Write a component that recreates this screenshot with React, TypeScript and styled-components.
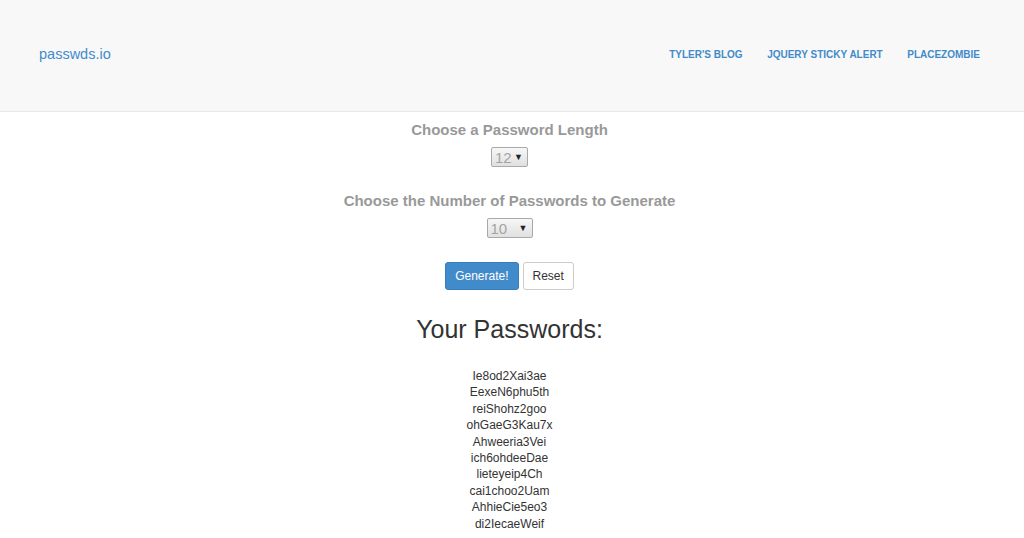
import styled, { createGlobalStyle } from "styled-components";

const GlobalStyle = createGlobalStyle`
  html, body {
    margin: 0;
    padding: 0;
    background: #ffffff;
    font-family: "Liberation Sans", Arial, sans-serif;
    color: #333333;
  }
`;

const passwords = [
  "Ie8od2Xai3ae",
  "EexeN6phu5th",
  "reiShohz2goo",
  "ohGaeG3Kau7x",
  "Ahweeria3Vei",
  "ich6ohdeeDae",
  "lieteyeip4Ch",
  "cai1choo2Uam",
  "AhhieCie5eo3",
  "di2IecaeWeif",
];

const links = ["Tyler's Blog", "jQuery Sticky Alert", "PlaceZombie"];

const Navbar = styled.header`
  height: 112px;
  box-sizing: border-box;
  background: #f8f8f8;
  border-bottom: 1px solid #e7e7e7;
  display: flex;
  align-items: center;
  justify-content: space-between;
  padding: 0 44px 3px 39px;
`;

const Brand = styled.a`
  font-size: 14.5px;
  color: #428bca;
  text-decoration: none;
`;

const NavLinks = styled.nav`
  display: flex;
  gap: 24.5px;
`;

const NavLink = styled.a`
  font-size: 10px;
  font-weight: bold;
  text-transform: uppercase;
  color: #428bca;
  text-decoration: none;
`;

const Main = styled.main`
  display: flex;
  flex-direction: column;
  align-items: center;
  padding: 8px 5px 0 0;
`;

const Label = styled.h3`
  margin: 0;
  font-size: 15px;
  line-height: 20px;
  font-weight: bold;
  color: #999999;
`;

const Select = styled.div<{ $width: number }>`
  margin-top: 7px;
  width: ${(p) => p.$width}px;
  height: 20px;
  box-sizing: border-box;
  border: 1px solid #a9a9a9;
  border-radius: 2px;
  background: linear-gradient(#f7f7f7, #e0e0e0);
  display: flex;
  align-items: center;
  justify-content: space-between;
  padding: 0 4px 0 3px;
  font-size: 15px;
  color: #a4a4a4;
`;

const Arrow = styled.span`
  font-size: 9px;
  color: #222;
`;

const Field = styled.div<{ $spacing?: number }>`
  display: flex;
  flex-direction: column;
  align-items: center;
  margin-bottom: ${(p) => p.$spacing ?? 0}px;
`;

const Buttons = styled.div`
  display: flex;
  gap: 4px;
`;

const Button = styled.button<{ $primary?: boolean }>`
  font-family: "Liberation Sans", Arial, sans-serif;
  font-size: 12px;
  line-height: 18px;
  padding: 4px 9px;
  border-radius: 3px;
  border: 1px solid ${(p) => (p.$primary ? "#357ebd" : "#cccccc")};
  background: ${(p) => (p.$primary ? "#428bca" : "#ffffff")};
  color: ${(p) => (p.$primary ? "#ffffff" : "#333333")};
  cursor: pointer;
`;

const Heading = styled.h2`
  margin: 24px 0 0;
  font-size: 25px;
  line-height: 30px;
  font-weight: normal;
  color: #333333;
`;

const List = styled.ul`
  list-style: none;
  margin: 24px 0 0;
  padding: 0;
  text-align: center;
`;

const Item = styled.li`
  font-size: 12px;
  line-height: 16.4px;
  color: #333333;
`;

export default function App() {
  return (
    <>
      <GlobalStyle />
      <Navbar>
        <Brand href="#">passwds.io</Brand>
        <NavLinks>
          {links.map((l) => (
            <NavLink key={l} href="#">
              {l}
            </NavLink>
          ))}
        </NavLinks>
      </Navbar>
      <Main>
        <Field $spacing={24}>
          <Label>Choose a Password Length</Label>
          <Select $width={37}>
            <span>12</span>
            <Arrow>▼</Arrow>
          </Select>
        </Field>
        <Field $spacing={24}>
          <Label>Choose the Number of Passwords to Generate</Label>
          <Select $width={46}>
            <span>10</span>
            <Arrow>▼</Arrow>
          </Select>
        </Field>
        <Buttons>
          <Button $primary>Generate!</Button>
          <Button>Reset</Button>
        </Buttons>
        <Heading>Your Passwords:</Heading>
        <List>
          {passwords.map((p) => (
            <Item key={p}>{p}</Item>
          ))}
        </List>
      </Main>
    </>
  );
}
